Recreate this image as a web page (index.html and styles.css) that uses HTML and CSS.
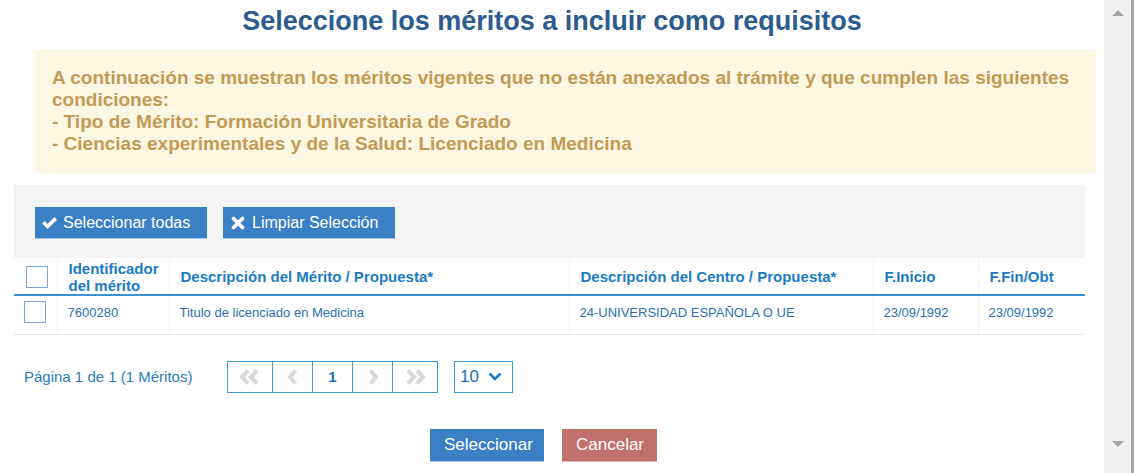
FILE: index.html
```html
<!DOCTYPE html>
<html lang="es">
<head>
    <meta charset="UTF-8">
    <meta name="viewport" content="width=device-width, initial-scale=1.0">
    <title>Seleccione los méritos</title>
    <link rel="stylesheet" href="styles.css">
</head>
<body>
    <div class="window">
        <main class="dialog">
            <h1 class="title">Seleccione los méritos a incluir como requisitos</h1>

            <div class="alert">
                A continuación se muestran los méritos vigentes que no están anexados al trámite y que cumplen las siguientes condiciones:<br>
                - Tipo de Mérito: Formación Universitaria de Grado<br>
                - Ciencias experimentales y de la Salud: Licenciado en Medicina
            </div>

            <div class="toolbar">
                <button class="btn btn-tool">
                    <svg class="ico" width="17" height="14" viewBox="0 0 17 14"><path d="M1 7.5 L3.6 4.9 L6.6 7.9 L13.4 1.1 L16 3.7 L6.6 13.1 Z" fill="#fff"/></svg>
                    Seleccionar todas
                </button>
                <button class="btn btn-tool btn-clear">
                    <svg class="ico" width="14" height="14" viewBox="0 0 14 14"><path d="M2.5 2.5 L11.5 11.5 M11.5 2.5 L2.5 11.5" stroke="#fff" stroke-width="3.8" stroke-linecap="round"/></svg>
                    Limpiar Selección
                </button>
            </div>

            <table class="grid">
                <colgroup>
                    <col style="width:43px">
                    <col style="width:112px">
                    <col style="width:400px">
                    <col style="width:304px">
                    <col style="width:105px">
                    <col style="width:107px">
                </colgroup>
                <thead>
                    <tr>
                        <th class="cell-check"><span class="check check-head"></span></th>
                        <th>Identificador del mérito</th>
                        <th>Descripción del Mérito / Propuesta*</th>
                        <th>Descripción del Centro / Propuesta*</th>
                        <th>F.Inicio</th>
                        <th>F.Fin/Obt</th>
                    </tr>
                </thead>
                <tbody>
                    <tr>
                        <td class="cell-check"><span class="check"></span></td>
                        <td>7600280</td>
                        <td>Titulo de licenciado en Medicina</td>
                        <td>24-UNIVERSIDAD ESPAÑOLA O UE</td>
                        <td>23/09/1992</td>
                        <td>23/09/1992</td>
                    </tr>
                </tbody>
            </table>

            <div class="pager-row">
                <span class="pager-info">Página 1 de 1 (1 Méritos)</span>
                <div class="pager">
                    <span class="page page-wide">
                        <svg width="24" height="16" viewBox="0 0 24 16"><path d="M10 1.5 L4 8 L10 14.5 M19 1.5 L13 8 L19 14.5" fill="none" stroke="#d9d9d9" stroke-width="4.2"/></svg>
                    </span>
                    <span class="page">
                        <svg width="12" height="16" viewBox="0 0 12 16"><path d="M8.5 1.5 L3 8 L8.5 14.5" fill="none" stroke="#d9d9d9" stroke-width="4.2"/></svg>
                    </span>
                    <span class="page page-current">1</span>
                    <span class="page">
                        <svg width="12" height="16" viewBox="0 0 12 16"><path d="M3.5 1.5 L9 8 L3.5 14.5" fill="none" stroke="#d9d9d9" stroke-width="4.2"/></svg>
                    </span>
                    <span class="page page-wide">
                        <svg width="24" height="16" viewBox="0 0 24 16"><path d="M5 1.5 L11 8 L5 14.5 M14 1.5 L20 8 L14 14.5" fill="none" stroke="#d9d9d9" stroke-width="4.2"/></svg>
                    </span>
                </div>
                <div class="page-size">
                    <span>10</span>
                    <svg width="14" height="9" viewBox="0 0 14 9"><path d="M1.5 1.5 L7 7 L12.5 1.5" fill="none" stroke="#1f7cc1" stroke-width="2.6"/></svg>
                </div>
            </div>

            <div class="actions">
                <button class="btn btn-primary">Seleccionar</button>
                <button class="btn btn-cancel">Cancelar</button>
            </div>
        </main>

        <div class="scrollbar">
            <span class="arrow arrow-up"></span>
            <span class="arrow arrow-down"></span>
        </div>
    </div>
</body>
</html>
```

FILE: styles.css
```css
body {
    font-family: 'Liberation Sans', Arial, sans-serif;
    margin: 0;
    padding: 0;
    background-color: #fff;
    color: #2b70b5;
    overflow: hidden;
}
.window {
    display: flex;
    height: 473px;
}
.dialog {
    width: 1104px;
    flex: none;
}
.title {
    margin: 0;
    height: 50px;
    padding-top: 5px;
    box-sizing: border-box;
    text-align: center;
    font-size: 27px;
    line-height: 32px;
    font-weight: 700;
    color: #2c5c8d;
}
.alert {
    margin: 0 8px 12px 35px;
    padding: 17px 17px 18px;
    background-color: #fcf7e3;
    color: #c39a55;
    font-size: 19px;
    line-height: 22px;
    font-weight: 700;
}
.toolbar {
    margin: 0 19px 0 14px;
    padding: 22px 21px 20px;
    background-color: #f4f4f4;
    border-radius: 0 4px 0 0;
    display: flex;
    gap: 16px;
}
.btn {
    font-family: inherit;
    border: none;
    color: #fff;
    font-size: 16px;
    cursor: pointer;
    height: 32px;
    padding: 0 14px;
}
.btn-tool {
    height: 31px;
    width: 172px;
    padding: 0 0 0 6px;
    background-color: #3b7fc4;
    display: flex;
    align-items: center;
    gap: 5px;
    box-shadow: 0 1px 0 #a9c6e6;
}
.btn-clear {
    padding-left: 8px;
    gap: 7px;
}
.grid {
    margin-left: 14px;
    width: 1071px;
    table-layout: fixed;
    border-collapse: collapse;
}
.grid th {
    height: 35px;
    padding: 1px 4px 0 11px;
    text-align: left;
    font-size: 15px;
    line-height: 17px;
    font-weight: 700;
    color: #1b7cc5;
    border-bottom: 2px solid #3a93d2;
    border-left: 1px solid #f2f6fa;
}
.grid td {
    height: 39px;
    padding: 0 4px 5px 10px;
    box-sizing: border-box;
    font-size: 13px;
    color: #2b70b5;
    border-bottom: 1px solid #e6e6e6;
    border-left: 1px solid #f3f3f3;
}
.grid th:first-child,
.grid td:first-child {
    border-left: none;
}
.grid th.cell-check {
    padding: 0 0 0 10px;
}
.grid td.cell-check {
    padding: 0 0 5px 10px;
}
.check {
    display: block;
    width: 20px;
    height: 20px;
    border: 1.5px solid #7fa5d6;
    background-color: #fff;
}
.check-head {
    margin: 2px 0 0 2px;
}
.pager-row {
    margin: 26px 0 0 24px;
    display: flex;
    align-items: center;
    height: 32px;
}
.pager-info {
    font-size: 15px;
    color: #2b7bbb;
    width: 203px;
}
.pager {
    display: flex;
    border: 1px solid #3c9ad8;
}
.page {
    width: 39px;
    height: 30px;
    display: flex;
    align-items: center;
    justify-content: center;
    border-left: 1px solid #3c9ad8;
    font-size: 15px;
    font-weight: 700;
    color: #1b6fb5;
}
.page:first-child {
    border-left: none;
}
.page-wide {
    width: 44px;
}
.page-size {
    margin-left: 16px;
    width: 59px;
    border: 1px solid #3c9ad8;
    display: flex;
    align-items: center;
    justify-content: space-between;
    padding: 0 10px 0 5px;
    box-sizing: border-box;
    height: 32px;
    font-size: 17px;
    color: #1b6fb5;
}
.actions {
    margin-top: 36px;
    padding-right: 17px;
    display: flex;
    justify-content: center;
    gap: 18px;
}
.btn-primary {
    width: 114px;
    font-size: 17px;
    background-color: #3b7fc4;
    box-shadow: 0 1px 0 #a9c6e6;
}
.btn-cancel {
    width: 95px;
    font-size: 17px;
    background-color: #c1706c;
    box-shadow: 0 1px 0 #e0b4b2;
}
.scrollbar {
    flex: 1;
    background-color: #f1f1f1;
    border-right: 3px solid #a8a8a8;
    display: flex;
    flex-direction: column;
    justify-content: space-between;
    align-items: center;
    padding: 10px 0 26px;
}
.arrow {
    width: 0;
    height: 0;
    border-left: 6px solid transparent;
    border-right: 6px solid transparent;
}
.arrow-up {
    border-bottom: 6px solid #a3a3a3;
}
.arrow-down {
    border-top: 6px solid #a3a3a3;
}
```
